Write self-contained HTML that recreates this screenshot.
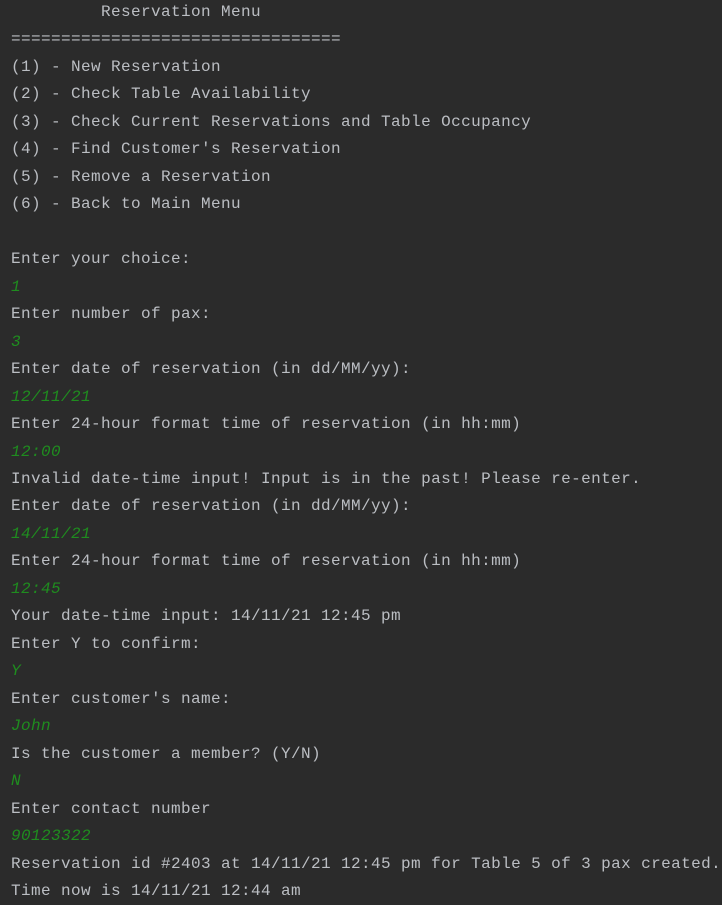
<!DOCTYPE html>
<html><head><meta charset="utf-8"><style>
html,body{margin:0;padding:0;background:#2b2b2b;width:722px;height:904px;overflow:hidden}
pre{margin:0;position:absolute;left:11px;top:-1px;font-family:"Liberation Mono","DejaVu Sans Mono",monospace;font-size:16px;letter-spacing:0.4px;line-height:27.47px;color:#bbbec3;white-space:pre}
i{color:#1f8c1f}
</style></head><body><pre>         Reservation Menu
=================================
(1) - New Reservation
(2) - Check Table Availability
(3) - Check Current Reservations and Table Occupancy
(4) - Find Customer's Reservation
(5) - Remove a Reservation
(6) - Back to Main Menu

Enter your choice:
<i>1</i>
Enter number of pax:
<i>3</i>
Enter date of reservation (in dd/MM/yy):
<i>12/11/21</i>
Enter 24-hour format time of reservation (in hh:mm)
<i>12:00</i>
Invalid date-time input! Input is in the past! Please re-enter.
Enter date of reservation (in dd/MM/yy):
<i>14/11/21</i>
Enter 24-hour format time of reservation (in hh:mm)
<i>12:45</i>
Your date-time input: 14/11/21 12:45 pm
Enter Y to confirm:
<i>Y</i>
Enter customer's name:
<i>John</i>
Is the customer a member? (Y/N)
<i>N</i>
Enter contact number
<i>90123322</i>
Reservation id #2403 at 14/11/21 12:45 pm for Table 5 of 3 pax created.
Time now is 14/11/21 12:44 am</pre></body></html>
